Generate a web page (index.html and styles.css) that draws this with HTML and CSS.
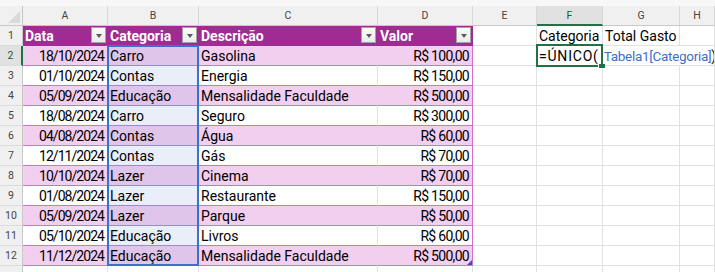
FILE: index.html
```html
<!DOCTYPE html>
<html lang="pt-BR">
<head>
<meta charset="utf-8">
<title>Planilha</title>
<link rel="stylesheet" href="styles.css">
</head>
<body>
<div class="sheet">
  <div class="topbar"></div>
  <div class="grid">
    <div class="ch corner"><svg width="12" height="12" viewBox="0 0 12 12"><polygon points="0,12 12,12 12,0" fill="#d9d9d9"/></svg></div>
    <div class="ch">A</div><div class="ch">B</div><div class="ch">C</div><div class="ch">D</div><div class="ch">E</div><div class="ch act">F</div><div class="ch">G</div><div class="ch">H</div>

    <div class="rh">1</div>
    <div class="th">Data<span class="dd"></span></div>
    <div class="th">Categoria<span class="dd"></span></div>
    <div class="th">Descrição<span class="dd"></span></div>
    <div class="th last">Valor<span class="dd"></span></div>
    <div></div><div>Categoria</div><div>Total Gasto</div><div></div>

    <div class="rh act">2</div>
    <div class="band date">18/10/2024</div><div class="band selb">Carro</div><div class="band">Gasolina</div><div class="band num last">R$ 100,00</div>
    <div></div><div class="formula"><span class="fn">=ÚNICO(</span><span class="ref">Tabela1[Categoria]</span>)</div><div class="under"></div><div></div>

    <div class="rh">3</div>
    <div class="plain date">01/10/2024</div><div class="plain selw">Contas</div><div class="plain">Energia</div><div class="plain num last">R$ 150,00</div>
    <div></div><div></div><div></div><div></div>

    <div class="rh">4</div>
    <div class="band date">05/09/2024</div><div class="band selb">Educação</div><div class="band">Mensalidade Faculdade</div><div class="band num last">R$ 500,00</div>
    <div></div><div></div><div></div><div></div>

    <div class="rh">5</div>
    <div class="plain date">18/08/2024</div><div class="plain selw">Carro</div><div class="plain">Seguro</div><div class="plain num last">R$ 300,00</div>
    <div></div><div></div><div></div><div></div>

    <div class="rh">6</div>
    <div class="band date">04/08/2024</div><div class="band selb">Contas</div><div class="band">Água</div><div class="band num last">R$ 60,00</div>
    <div></div><div></div><div></div><div></div>

    <div class="rh">7</div>
    <div class="plain date">12/11/2024</div><div class="plain selw">Contas</div><div class="plain">Gás</div><div class="plain num last">R$ 70,00</div>
    <div></div><div></div><div></div><div></div>

    <div class="rh">8</div>
    <div class="band date">10/10/2024</div><div class="band selb">Lazer</div><div class="band">Cinema</div><div class="band num last">R$ 70,00</div>
    <div></div><div></div><div></div><div></div>

    <div class="rh">9</div>
    <div class="plain date">01/08/2024</div><div class="plain selw">Lazer</div><div class="plain">Restaurante</div><div class="plain num last">R$ 150,00</div>
    <div></div><div></div><div></div><div></div>

    <div class="rh">10</div>
    <div class="band date">05/09/2024</div><div class="band selb">Lazer</div><div class="band">Parque</div><div class="band num last">R$ 50,00</div>
    <div></div><div></div><div></div><div></div>

    <div class="rh">11</div>
    <div class="plain date">05/10/2024</div><div class="plain selw">Educação</div><div class="plain">Livros</div><div class="plain num last">R$ 60,00</div>
    <div></div><div></div><div></div><div></div>

    <div class="rh">12</div>
    <div class="band date">11/12/2024</div><div class="band selb">Educação</div><div class="band">Mensalidade Faculdade</div><div class="band num last">R$ 500,00</div>
    <div></div><div></div><div></div><div></div>

    <div class="rh"></div>
    <div></div><div></div><div></div><div></div><div></div><div></div><div></div><div></div>
  </div>

  <div class="selbox"></div>
  <div class="actbox"></div>
  <div class="handle"></div>
  <svg class="resize" width="5" height="5" viewBox="0 0 5 5"><polygon points="5,0 5,5 0,5" fill="#2f58b8"/></svg>
</div>
</body>
</html>
```
FILE: styles.css
```css
body {
  margin: 0;
  background: #ffffff;
  font-family: Roboto, "Liberation Sans", sans-serif;
  overflow: hidden;
}

.sheet {
  position: relative;
  width: 715px;
  height: 272px;
  overflow: hidden;
}

.topbar {
  height: 6px;
  background: #f7f7f7;
}

.grid {
  display: grid;
  grid-template-columns: 23px 85px 91px 179px 95px 64px 66px 77px 35px;
  grid-auto-rows: 20px;
}

.grid > div {
  box-sizing: border-box;
  min-width: 0;
  border-right: 1px solid #e1e1e1;
  border-bottom: 1px solid #e1e1e1;
  padding: 1px 2px 0;
  font-size: 14px;
  line-height: 18px;
  color: #000;
  white-space: nowrap;
}

/* column headers */
.grid > .ch {
  background: #f0f0f0;
  border-right-color: #d7d7d7;
  border-bottom-color: #c8c8c8;
  padding: 0;
  font-size: 10.5px;
  line-height: 19px;
  color: #444;
  text-align: center;
}

.grid > .corner {
  display: flex;
  justify-content: flex-end;
  align-items: flex-end;
  padding: 0 2px 2px 0;
  border-right-color: #c8c8c8;
}

.grid > .ch.act {
  background: #e1e1e1;
  color: #185a33;
  border-bottom: 2px solid #1f7244;
}

/* row headers */
.grid > .rh {
  background: #f0f0f0;
  border-right-color: #c8c8c8;
  border-bottom-color: #dcdcdc;
  padding: 1px 0 0;
  font-size: 10.5px;
  line-height: 18px;
  color: #444;
  text-align: center;
}

.grid > .rh.act {
  background: #e1e1e1;
  color: #185a33;
  border-right: 2px solid #1f7244;
}

/* table header */
.grid > .th {
  display: flex;
  align-items: flex-start;
  background: #a02b93;
  border-right-color: #a02b93;
  border-bottom-color: #a02b93;
  padding: 1px 1px 0 2px;
  color: #ffffff;
  font-weight: 700;
}

.dd {
  margin-left: auto;
  width: 15px;
  height: 16px;
  box-sizing: border-box;
  border: 1px solid #a3a3a3;
  background: linear-gradient(#fbfbfb, #ececec);
  display: flex;
  align-items: center;
  justify-content: center;
  padding-top: 1px;
}

.dd::after {
  content: "";
  width: 0;
  height: 0;
  border-left: 3.5px solid transparent;
  border-right: 3.5px solid transparent;
  border-top: 4px solid #5a5a5a;
}

/* table body */
.grid > .band {
  background: #f2ceef;
  border-right-color: #f2ceef;
  border-bottom-color: #d86ecc;
}

.grid > .plain {
  background: #ffffff;
  border-bottom-color: #d86ecc;
}

.grid > .selb {
  background: #dfc5ea;
}

.grid > .selw {
  background: #e9eef8;
}

.grid > .last {
  border-right-color: #d86ecc;
}

.grid > .th.last {
  border-right-color: #a02b93;
}

.grid > .num {
  text-align: right;
  letter-spacing: -0.7px;
  padding-right: 3px;
}

.grid > .date {
  text-align: right;
  letter-spacing: -0.95px;
  padding-right: 3px;
}

.grid > .formula {
  overflow: visible;
  padding-left: 2px;
}

.fn {
  letter-spacing: 0.8px;
  margin-right: 5px;
}

.grid > .under {
  border-right-color: #ffffff;
}

.ref {
  color: #3d6fcc;
  font-size: 13.5px;
  letter-spacing: -0.3px;
}

/* overlays */
.selbox {
  position: absolute;
  left: 107px;
  top: 45px;
  width: 92px;
  height: 221px;
  box-sizing: border-box;
  border: 2px solid #3d6fcc;
}

.actbox {
  position: absolute;
  left: 536px;
  top: 44px;
  width: 67px;
  height: 23px;
  box-sizing: border-box;
  border: 2px solid #1f7244;
}

.handle {
  position: absolute;
  left: 598px;
  top: 64px;
  width: 6px;
  height: 4px;
  background: #1f7244;
  border-left: 1px solid #ffffff;
}

.resize {
  position: absolute;
  left: 467px;
  top: 260px;
}
```
